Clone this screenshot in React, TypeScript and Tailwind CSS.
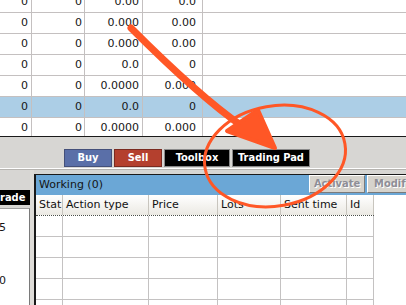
export default function App() {
  const topRows = [
    ["0", "0", "0.00", "0.0"],
    ["0", "0", "0.000", "0.00"],
    ["0", "0", "0.000", "0.00"],
    ["0", "0", "0.0", "0"],
    ["0", "0", "0.0000", "0.000"],
    ["0", "0", "0.0", "0"],
    ["0", "0", "0.0000", "0.000"],
  ];
  const cols = [
    { name: "Stat", w: "w-[27px]" },
    { name: "Action type", w: "w-[86px]" },
    { name: "Price", w: "w-[69px]" },
    { name: "Lots", w: "w-[63px]" },
    { name: "Sent time", w: "w-[66px]" },
    { name: "Id", w: "w-[27px]" },
  ];
  const bold = "font-['DejaVu_Sans_Condensed','DejaVu_Sans',sans-serif] [font-stretch:condensed] font-bold";
  return (
    <div className="relative w-[406px] h-[305px] overflow-hidden bg-[#d7d6d3] font-['DejaVu_Sans',sans-serif] text-[11px] text-[#161616]">
      {/* top grid */}
      <div className="h-[137px] overflow-hidden bg-white border-b border-[#1a1a1a]">
        <div className="-mt-[8px]">
          {topRows.map((r, i) => (
            <div
              key={i}
              className={`flex h-[21px] border-b border-[#c4c0c0] ${i === 5 ? "bg-[#acceE6]" : ""}`}
            >
              <div className="w-[32px] border-r border-[#c4c0c0] flex items-center justify-end pr-[3px]">{r[0]}</div>
              <div className="w-[53px] border-r border-[#c4c0c0] flex items-center justify-end pr-[2px]">{r[1]}</div>
              <div className="w-[58px] border-r border-[#c4c0c0] flex items-center justify-end pr-[3px]">{r[2]}</div>
              <div className="w-[60px] border-r border-[#c4c0c0] flex items-center justify-end pr-[6px]">{r[3]}</div>
              <div className="flex-1" />
            </div>
          ))}
        </div>
      </div>

      {/* toolbar */}
      <div className="h-[32px] border-b border-white flex items-start pt-[12px] pl-[64px] gap-[2px]">
        <div className={`w-[48px] h-[18px] bg-[#5a6fa8] border border-[#44507a] text-white flex items-center justify-center ${bold}`}>Buy</div>
        <div className={`w-[48px] h-[18px] bg-[#b4402e] border border-[#7a2a20] text-white flex items-center justify-center ${bold}`}>Sell</div>
        <div className={`w-[66px] h-[18px] bg-black border border-[#8a8a8a] text-white flex items-center justify-center ${bold}`}>Toolbox</div>
        <div className={`w-[78px] h-[18px] bg-black border border-[#8a8a8a] text-white flex items-center justify-center ${bold}`}>Trading Pad</div>
      </div>

      {/* bottom area */}
      <div className="flex h-[136px] border-t border-[#b6b4b0]">
        {/* left panel */}
        <div className="w-[30px] flex flex-col">
          <div className={`mt-[20px] h-[15px] bg-black text-white leading-[15px] overflow-hidden whitespace-nowrap ${bold}`}>rade</div>
          <div className="mt-[3px] flex-1 bg-white border-t border-[#a0a0a0] border-r border-r-[#7a7a7a] flex flex-col">
            <div className="mt-[12px] h-[13px] leading-[13px] -ml-[1px]">5</div>
            <div className="mt-[40px] h-[13px] leading-[13px] -ml-[1px]">0</div>
          </div>
        </div>
        {/* splitter */}
        <div className="w-[4px] bg-[#dedcd8]" />
        {/* working panel */}
        <div className="flex-1 mt-[4px] flex flex-col bg-white border-t border-l-2 border-[#1a1a1a] overflow-hidden">
          <div className="h-[20px] bg-[#6ba7d6] flex items-start overflow-hidden shrink-0">
            <div className="w-[273px] shrink-0 pl-[3px] h-[20px] leading-[20px] text-[#141414]">Working (0)</div>
            <div className={`w-[56px] h-[18px] shrink-0 bg-[#d6d3cc] border border-t-white border-l-white border-b-[#7a7a7a] border-r-[#7a7a7a] text-[#8e8e96] flex items-center justify-center [text-shadow:1px_1px_0_#ffffff] ${bold}`}>Activate</div>
            <div className={`ml-[2px] w-[52px] h-[18px] shrink-0 bg-[#d6d3cc] border border-t-white border-l-white border-b-[#7a7a7a] border-r-[#7a7a7a] text-[#8e8e96] flex items-center justify-center [text-shadow:1px_1px_0_#ffffff] ${bold}`}>Modify</div>
          </div>
          <div className="w-[338px] flex h-[21px] border-b border-dotted border-[#4a4f4a] shrink-0">
            {cols.map((c) => (
              <div
                key={c.name}
                className={`${c.w} shrink-0 border-r border-[#c8c5be] bg-gradient-to-b from-[#ffffff] to-[#ebe9e3] pl-[3px] flex items-center whitespace-nowrap overflow-hidden text-[#111]`}
              >
                {c.name}
              </div>
            ))}
          </div>
          {[0, 1, 2, 3, 4].map((i) => (
            <div key={i} className="w-[338px] flex h-[21px] border-b border-[#c4c2c2] shrink-0">
              {cols.map((c) => (
                <div key={c.name} className={`${c.w} shrink-0 border-r border-[#c4c2c2]`} />
              ))}
            </div>
          ))}
        </div>
      </div>

      {/* annotation overlay */}
      <svg className="absolute left-0 top-0 pointer-events-none" width="406" height="305" viewBox="0 0 406 305">
        <path d="M131 28 Q200 97 242 126" fill="none" stroke="#ff5726" strokeWidth="7" strokeLinecap="round" />
        <polygon points="227,131 258,110 275,148" fill="#ff5726" stroke="#ff5726" strokeWidth="4" strokeLinejoin="round" />
        <ellipse cx="275" cy="156" rx="71" ry="50" transform="rotate(-10 275 156)" fill="none" stroke="#ff5726" strokeWidth="3" />
      </svg>
    </div>
  );
}
